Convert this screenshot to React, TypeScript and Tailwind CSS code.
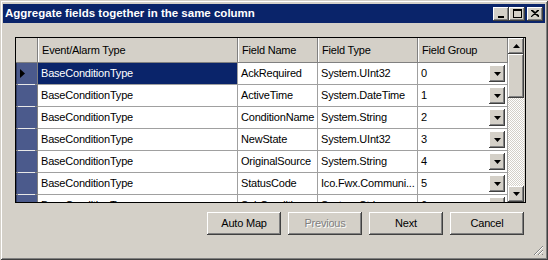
import React from "react";

const raised =
  "bg-[#d4d0c8] shadow-[inset_-1px_-1px_0_#404040,inset_1px_1px_0_#ffffff,inset_-2px_-2px_0_#808080,inset_2px_2px_0_#d4d0c8]";

const rows = [
  { name: "AckRequired", type: "System.UInt32", group: "0" },
  { name: "ActiveTime", type: "System.DateTime", group: "1" },
  { name: "ConditionName", type: "System.String", group: "2" },
  { name: "NewState", type: "System.UInt32", group: "3" },
  { name: "OriginalSource", type: "System.String", group: "4" },
  { name: "StatusCode", type: "Ico.Fwx.Communi...", group: "5" },
  { name: "SubCondition", type: "System.String", group: "6" },
];

const DownArrow = () => (
  <svg width="7" height="4" viewBox="0 0 7 4">
    <path d="M0 0h7L3.5 4z" fill="#000" />
  </svg>
);

const App = () => {
  return (
    <div
      className="flex h-[260px] w-[548px] flex-col overflow-hidden bg-[#d4d0c8] text-[11px] tracking-[-0.2px] text-black shadow-[inset_1px_1px_0_#d4d0c8,inset_-1px_-1px_0_#404040,inset_2px_2px_0_#ffffff,inset_-2px_-2px_0_#808080]"
      style={{ fontFamily: '"Liberation Sans", Arial, sans-serif' }}
    >
      {/* title bar */}
      <div className="mx-[3px] mt-[4px] flex h-[19px] items-center bg-[#0a246a] pl-[2px] pr-[2px]">
        <span className="flex-1 text-[11.5px] font-bold tracking-normal text-white">
          Aggregate fields together in the same column
        </span>
        <div className="flex items-center">
          <div className={`flex h-[14px] w-[16px] items-end justify-center pb-[3px] ${raised}`}>
            <div className="ml-[-1px] h-[2px] w-[6px] bg-black" />
          </div>
          <div className={`flex h-[14px] w-[16px] items-center justify-center ${raised}`}>
            <div className="mb-[1px] h-[9px] w-[9px] border border-t-2 border-black" />
          </div>
          <div className={`ml-[2px] flex h-[14px] w-[16px] items-center justify-center ${raised}`}>
            <svg width="8" height="7" viewBox="0 0 8 7" className="mb-[1px]">
              <path d="M0 0l8 7M1 0l7 6M7 0L0 7M8 0L1 6" stroke="#000" strokeWidth="1.2" />
            </svg>
          </div>
        </div>
      </div>

      {/* data grid */}
      <div className="ml-[15px] mt-[14px] flex h-[166px] w-[511px] border border-black bg-[#d4d0c8]">
        <div className="flex w-[492px] flex-col overflow-hidden">
          {/* header */}
          <div className="flex h-[25px] shrink-0 border-b border-[#808080]">
            <div className="w-[22px] shadow-[inset_-1px_0_0_#808080]" />
            {[
              ["Event/Alarm Type", "w-[200px]"],
              ["Field Name", "w-[80px]"],
              ["Field Type", "w-[100px]"],
              ["Field Group", "w-[90px]"],
            ].map(([label, w]) => (
              <div
                key={label}
                className={`${w} flex items-center pl-[4px] shadow-[inset_-1px_0_0_#808080,inset_1px_0_0_#ffffff]`}
              >
                {label}
              </div>
            ))}
          </div>
          {/* rows */}
          {rows.map((r, i) => (
            <div key={r.name} className="flex h-[22px] shrink-0 bg-white">
              <div className="relative flex w-[22px] items-center border-r border-b border-[#808080] bg-[#4b5a8c] shadow-[inset_1px_0_0_#2e3a63]">
                {i === 0 && (
                  <svg width="5" height="9" viewBox="0 0 5 9" className="ml-[4px]">
                    <path d="M0 0l5 4.5L0 9z" fill="#000" />
                  </svg>
                )}
                <div className="absolute bottom-[-1px] left-[2px] right-[2px] h-px bg-[#e8e8e8]" />
              </div>
              <div
                className={`flex w-[200px] items-center border-r border-b border-[#a0a0a0] pl-[3px] ${
                  i === 0 ? "bg-[#0a246a] text-white" : ""
                }`}
              >
                BaseConditionType
              </div>
              <div className="flex w-[80px] items-center overflow-hidden whitespace-nowrap border-r border-b border-[#a0a0a0] pl-[3px]">
                {r.name}
              </div>
              <div className="flex w-[100px] items-center overflow-hidden whitespace-nowrap border-r border-b border-[#a0a0a0] pl-[3px]">
                {r.type}
              </div>
              <div className="flex w-[90px] items-center border-r border-b border-[#a0a0a0] pl-[3px] pr-[2px]">
                <span className="flex-1">{r.group}</span>
                <div className={`flex h-[17px] w-[16px] items-center justify-center ${raised}`}>
                  <DownArrow />
                </div>
              </div>
            </div>
          ))}
        </div>
        {/* vertical scrollbar */}
        <div className="flex w-[17px] flex-col">
          <div className={`flex h-[16px] w-[16px] items-center justify-center ${raised}`}>
            <svg width="7" height="4" viewBox="0 0 7 4">
              <path d="M0 4h7L3.5 0z" fill="#000" />
            </svg>
          </div>
          <div className={`h-[44px] w-[16px] ${raised}`} />
          <div className="w-[16px] flex-1 bg-[repeating-conic-gradient(#ffffff_0%_25%,#d4d0c8_0%_50%)] bg-[length:2px_2px]" />
          <div className={`flex h-[16px] w-[16px] items-center justify-center ${raised}`}>
            <DownArrow />
          </div>
        </div>
      </div>

      {/* buttons */}
      <div className="mr-[24px] mt-[9px] flex justify-end gap-[7px]">
        {["Auto Map", "Previous", "Next", "Cancel"].map((b) => (
          <div
            key={b}
            className={`flex h-[23px] w-[74px] items-center justify-center ${raised} ${
              b === "Previous" ? "text-[#808080] [text-shadow:1px_1px_0_#ffffff]" : ""
            }`}
          >
            {b}
          </div>
        ))}
      </div>

      {/* size grip */}
      <div className="mr-[4px] mt-auto mb-[4px] flex justify-end">
        <svg width="11" height="11" viewBox="0 0 11 11">
          <path d="M10 1L1 10M10 5L5 10M10 9L9 10" stroke="#808080" strokeWidth="1" />
          <path d="M10 2L2 10M10 6L6 10" stroke="#ffffff" strokeWidth="1" />
        </svg>
      </div>
    </div>
  );
};

export default App;
